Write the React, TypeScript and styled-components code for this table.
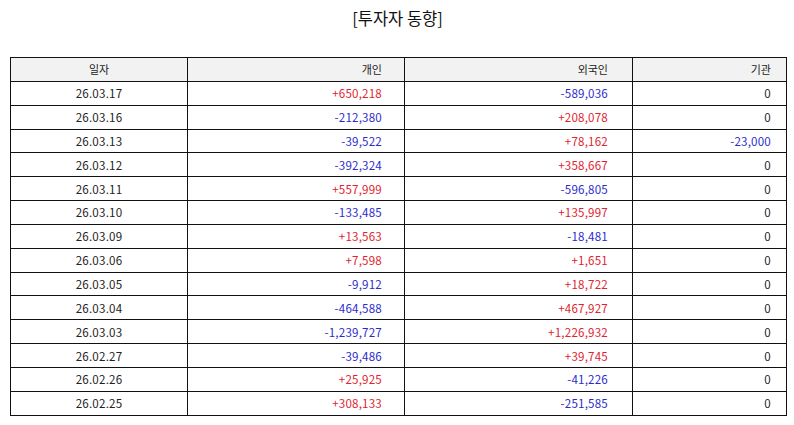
import styled, { createGlobalStyle } from "styled-components";

const GlobalStyle = createGlobalStyle`
  html, body {
    margin: 0;
    padding: 0;
    background: #ffffff;
  }
  body {
    font-family: "Noto Sans CJK KR", "Noto Sans", sans-serif;
    color: #222222;
  }
`;

type Row = {
  date: string;
  person: string;
  foreign: string;
  inst: string;
};

const rows: Row[] = [
  { date: "26.03.17", person: "+650,218", foreign: "-589,036", inst: "0" },
  { date: "26.03.16", person: "-212,380", foreign: "+208,078", inst: "0" },
  { date: "26.03.13", person: "-39,522", foreign: "+78,162", inst: "-23,000" },
  { date: "26.03.12", person: "-392,324", foreign: "+358,667", inst: "0" },
  { date: "26.03.11", person: "+557,999", foreign: "-596,805", inst: "0" },
  { date: "26.03.10", person: "-133,485", foreign: "+135,997", inst: "0" },
  { date: "26.03.09", person: "+13,563", foreign: "-18,481", inst: "0" },
  { date: "26.03.06", person: "+7,598", foreign: "+1,651", inst: "0" },
  { date: "26.03.05", person: "-9,912", foreign: "+18,722", inst: "0" },
  { date: "26.03.04", person: "-464,588", foreign: "+467,927", inst: "0" },
  { date: "26.03.03", person: "-1,239,727", foreign: "+1,226,932", inst: "0" },
  { date: "26.02.27", person: "-39,486", foreign: "+39,745", inst: "0" },
  { date: "26.02.26", person: "+25,925", foreign: "-41,226", inst: "0" },
  { date: "26.02.25", person: "+308,133", foreign: "-251,585", inst: "0" },
];

const Page = styled.div`
  width: 794px;
  height: 425px;
  box-sizing: border-box;
  padding: 6px 9px 0 10px;
`;

const Title = styled.h1`
  margin: 0;
  height: 24px;
  text-align: center;
  font-size: 16.5px;
  font-weight: 400;
  line-height: 24px;
  color: #111111;
`;

const Table = styled.table`
  margin-top: 27px;
  width: 776px;
  border-collapse: collapse;
  table-layout: fixed;
  font-size: 11px;
`;

const HeadCell = styled.th<{ $align: "center" | "right"; $pad: number }>`
  height: 22.85px;
  padding: 0 ${(p) => p.$pad}px 0 0;
  border: 1px solid #111111;
  background: #f2f2f2;
  font-weight: 400;
  text-align: ${(p) => p.$align};
  color: #222222;
`;

const Cell = styled.td<{ $align: "center" | "right"; $pad: number; $tone: string }>`
  height: 22.85px;
  padding: 0 ${(p) => p.$pad}px 0 0;
  border: 1px solid #111111;
  text-align: ${(p) => p.$align};
  color: ${(p) => p.$tone};
  font-size: 11.6px;
  letter-spacing: 0.2px;
  white-space: nowrap;
`;

const tone = (v: string) =>
  v.startsWith("+") ? "#e0232e" : v.startsWith("-") ? "#2b2bcc" : "#1c1c1c";

const columns = [
  { label: "일자", width: 177, align: "center" as const, pad: 0 },
  { label: "개인", width: 217, align: "right" as const, pad: 22 },
  { label: "외국인", width: 228, align: "right" as const, pad: 24 },
  { label: "기관", width: 154, align: "right" as const, pad: 15 },
];

export default function App() {
  return (
    <>
      <GlobalStyle />
      <Page>
        <Title>[투자자 동향]</Title>
        <Table>
          <colgroup>
            {columns.map((c) => (
              <col key={c.label} style={{ width: c.width }} />
            ))}
          </colgroup>
          <thead>
            <tr>
              {columns.map((c) => (
                <HeadCell key={c.label} $align={c.align} $pad={c.pad}>
                  {c.label}
                </HeadCell>
              ))}
            </tr>
          </thead>
          <tbody>
            {rows.map((r) => (
              <tr key={r.date}>
                <Cell $align="center" $pad={0} $tone="#222222">
                  {r.date}
                </Cell>
                <Cell $align="right" $pad={22} $tone={tone(r.person)}>
                  {r.person}
                </Cell>
                <Cell $align="right" $pad={24} $tone={tone(r.foreign)}>
                  {r.foreign}
                </Cell>
                <Cell $align="right" $pad={15} $tone={tone(r.inst)}>
                  {r.inst}
                </Cell>
              </tr>
            ))}
          </tbody>
        </Table>
      </Page>
    </>
  );
}
